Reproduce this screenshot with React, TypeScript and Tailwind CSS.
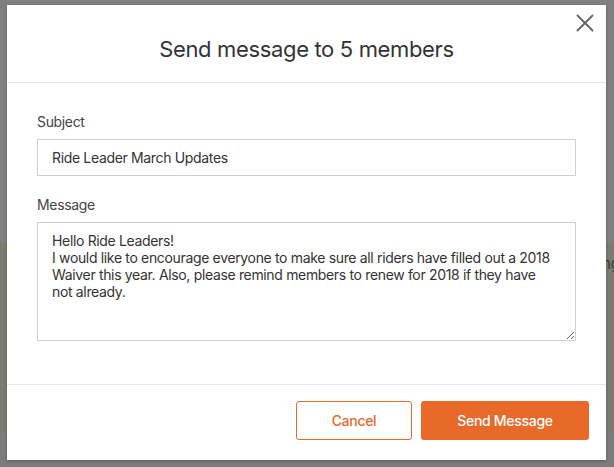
import { X } from 'lucide-react'

const font = { fontFamily: 'Inter, "Liberation Sans", sans-serif' }

export default function App() {
  return (
    <div className="relative w-[614px] h-[467px] overflow-hidden bg-[#808080]" style={font}>
      {/* page behind the overlay */}
      <div className="flex flex-col h-full">
        <div className="h-[243px]" />
        <div className="h-[189px] bg-[#7b7b72] flex justify-end">
          <span className="mt-[10px] mr-[-6px] text-[15px] text-[#3a3a36]">ng</span>
        </div>
        <div className="flex-1 bg-[#7c7c7c]" />
      </div>

      {/* modal */}
      <div className="absolute left-[7px] top-[5px] w-[599px] h-[455px] bg-white shadow-[0_1px_3px_rgba(0,0,0,0.25)] flex flex-col">
        <div className="relative h-[78px] border-b border-[#e6e6e6] flex justify-center pt-[31px]">
          <h2 className="text-[22px] leading-[26px] text-[#333] tracking-[-0.35px]">Send message to 5 members</h2>
          <button className="absolute right-[6px] top-[3px] text-[#666]">
            <X size={30} strokeWidth={1.5} />
          </button>
        </div>

        <div className="flex flex-col px-[30px] pt-[29px] pb-[43px] border-b border-[#e6e6e6] text-[14px] tracking-[-0.34px]">
          <label className="leading-[20px] text-[#444]">Subject</label>
          <input
            className="mt-[7px] h-[37px] border border-[#cfcfcf] px-[14px] text-[#333] outline-none"
            defaultValue="Ride Leader March Updates"
          />
          <label className="mt-[19px] leading-[20px] text-[#444]">Message</label>
          <textarea
            className="mt-[7px] h-[119px] border border-[#cfcfcf] pl-[14px] pr-[20px] py-[9px] leading-[17px] text-[#333] outline-none"
            defaultValue={
              'Hello Ride Leaders!\nI would like to encourage everyone to make sure all riders have filled out a 2018 Waiver this year. Also, please remind members to renew for 2018 if they have not already.'
            }
          />
        </div>

        <div className="flex-1 flex justify-end items-start pt-[16px] pr-[17px] gap-[9px] text-[14px] font-medium tracking-[-0.3px]">
          <button className="w-[116px] h-[39px] rounded-[3px] border border-[#e8692a] text-[#e8692a] bg-white">
            Cancel
          </button>
          <button className="w-[168px] h-[39px] rounded-[3px] bg-[#e8692a] text-white">
            Send Message
          </button>
        </div>
      </div>
    </div>
  )
}
